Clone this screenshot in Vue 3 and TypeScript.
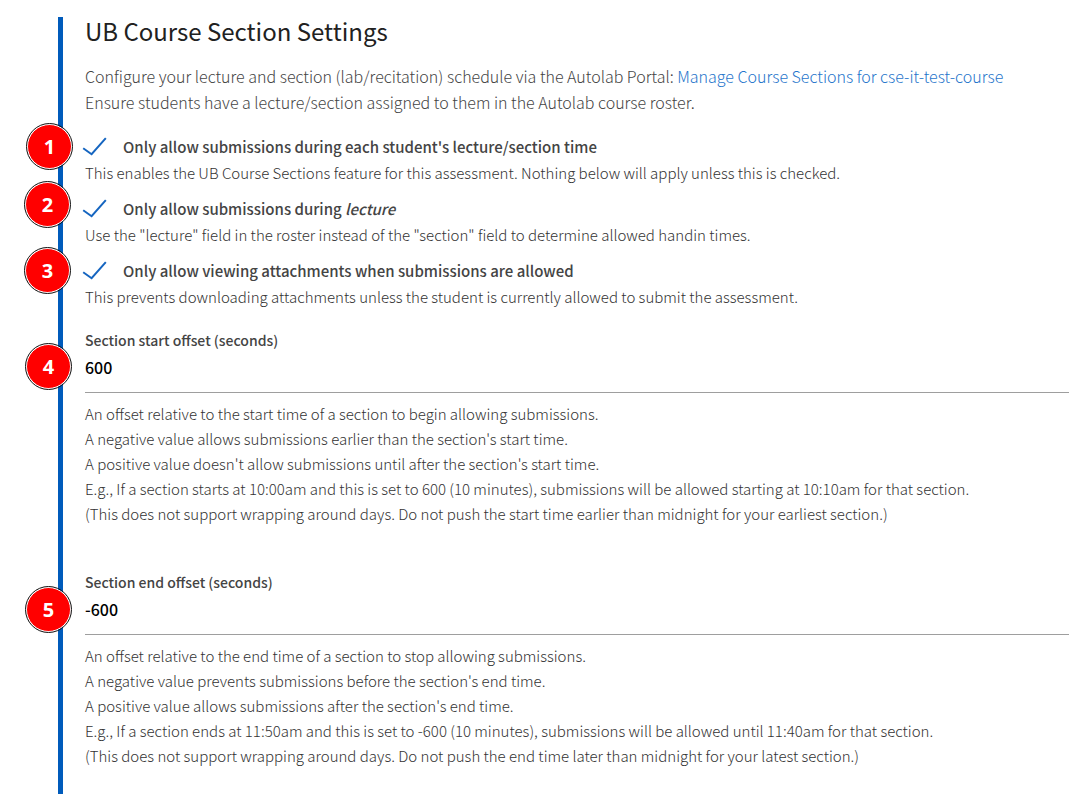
<script setup lang="ts">
import { reactive } from 'vue'

interface Toggle {
  id: string
  checked: boolean
  text: string
  emphasis?: string
  help: string
}

interface Offset {
  id: string
  label: string
  value: string
  help: string[]
}

interface Marker {
  number: number
  x: number
  y: number
}

const toggles = reactive<Toggle[]>([
  {
    id: 'section-time',
    checked: true,
    text: "Only allow submissions during each student's lecture/section time",
    help: 'This enables the UB Course Sections feature for this assessment. Nothing below will apply unless this is checked.',
  },
  {
    id: 'lecture-only',
    checked: true,
    text: 'Only allow submissions during ',
    emphasis: 'lecture',
    help: 'Use the "lecture" field in the roster instead of the "section" field to determine allowed handin times.',
  },
  {
    id: 'attachments',
    checked: true,
    text: 'Only allow viewing attachments when submissions are allowed',
    help: 'This prevents downloading attachments unless the student is currently allowed to submit the assessment.',
  },
])

const offsets = reactive<Offset[]>([
  {
    id: 'start-offset',
    label: 'Section start offset (seconds)',
    value: '600',
    help: [
      'An offset relative to the start time of a section to begin allowing submissions.',
      "A negative value allows submissions earlier than the section's start time.",
      "A positive value doesn't allow submissions until after the section's start time.",
      'E.g., If a section starts at 10:00am and this is set to 600 (10 minutes), submissions will be allowed starting at 10:10am for that section.',
      '(This does not support wrapping around days. Do not push the start time earlier than midnight for your earliest section.)',
    ],
  },
  {
    id: 'end-offset',
    label: 'Section end offset (seconds)',
    value: '-600',
    help: [
      'An offset relative to the end time of a section to stop allowing submissions.',
      "A negative value prevents submissions before the section's end time.",
      "A positive value allows submissions after the section's end time.",
      'E.g., If a section ends at 11:50am and this is set to -600 (10 minutes), submissions will be allowed until 11:40am for that section.',
      '(This does not support wrapping around days. Do not push the end time later than midnight for your latest section.)',
    ],
  },
])

// Centre points of the numbered callouts pinned over the form
const markers: Marker[] = [
  { number: 1, x: 49, y: 146 },
  { number: 2, x: 47, y: 204 },
  { number: 3, x: 47, y: 270 },
  { number: 4, x: 48, y: 366 },
  { number: 5, x: 48, y: 609 },
]
</script>

<template>
  <main class="page">
    <form class="settings" @submit.prevent>
      <h1 class="title">UB Course Section Settings</h1>
      <p class="intro">
        Configure your lecture and section (lab/recitation) schedule via the Autolab Portal:
        <a href="#sections">Manage Course Sections for cse-it-test-course</a><br />
        Ensure students have a lecture/section assigned to them in the Autolab course roster.
      </p>

      <div class="toggles">
        <div v-for="t in toggles" :key="t.id" class="toggle">
          <label class="toggle-label" :for="t.id">
            <span class="tick">
              <input :id="t.id" v-model="t.checked" type="checkbox" :aria-describedby="t.id + '-help'" />
              <svg v-show="t.checked" viewBox="0 0 26 22" aria-hidden="true">
                <path d="M1.2 12.2 9.6 18.2 23.8 2.2" />
              </svg>
            </span>
            <span>{{ t.text }}<em v-if="t.emphasis">{{ t.emphasis }}</em></span>
          </label>
          <p :id="t.id + '-help'" class="toggle-help">{{ t.help }}</p>
        </div>
      </div>

      <div class="offsets">
        <div v-for="o in offsets" :key="o.id" class="offset">
          <label class="offset-label" :for="o.id">{{ o.label }}</label>
          <input :id="o.id" v-model="o.value" class="offset-input" type="text" />
          <p class="offset-help">
            <span v-for="line in o.help" :key="line">{{ line }}</span>
          </p>
        </div>
      </div>
    </form>

    <span
      v-for="m in markers"
      :key="m.number"
      class="marker"
      :style="{ left: m.x + 'px', top: m.y + 'px' }"
    >{{ m.number }}</span>
  </main>
</template>

<style>
body {
  background: #fff;
}
</style>

<style scoped>
.page {
  position: relative;
  padding: 17px 0 18px 58px;
  font-family: "Noto Sans CJK SC", "Open Sans", sans-serif;
  font-size: 15px;
  font-weight: 300;
  color: #333;
}

.settings {
  border-left: 5px solid #005bbb;
  padding: 0 0 26px 22px;
}

.title {
  margin: 0 0 18px;
  font-size: 24px;
  line-height: 28px;
  font-weight: 400;
  color: #212121;
}

.intro {
  margin: 0 0 19px;
  font-size: 16px;
  line-height: 26px;
  color: #444;
}

.intro a {
  color: #1f75cb;
  text-decoration: none;
}

.toggles {
  display: flex;
  flex-direction: column;
  gap: 10px;
  margin-bottom: 18px;
}

.toggle-label {
  display: flex;
  align-items: center;
  gap: 15px;
  line-height: 26px;
  font-weight: 500;
  color: #444;
}

.tick {
  position: relative;
  width: 26px;
  height: 22px;
  margin-left: -3px;
}

.tick input {
  position: absolute;
  inset: 0;
  width: 100%;
  height: 100%;
  margin: 0;
  appearance: none;
}

.tick svg {
  position: absolute;
  inset: 0;
  width: 100%;
  height: 100%;
  pointer-events: none;
  fill: none;
  stroke: #1565c0;
  stroke-width: 2;
}

.toggle-help {
  margin: 0;
  line-height: 26px;
}

.offsets {
  display: flex;
  flex-direction: column;
  gap: 44px;
}

.offset {
  display: flex;
  flex-direction: column;
}

.offset-label {
  font-size: 14px;
  line-height: 24px;
  font-weight: 500;
  color: #444;
}

.offset-input {
  box-sizing: border-box;
  width: 100%;
  height: 41px;
  padding: 0 0 10px;
  border: 0;
  border-bottom: 1px solid #9e9e9e;
  border-radius: 0;
  background: transparent;
  font-family: inherit;
  font-size: 16px;
  font-weight: 500;
  color: #000;
  outline: none;
}

.offset-help {
  display: flex;
  flex-direction: column;
  margin: 8px 0 0;
  line-height: 25px;
}

.marker {
  position: absolute;
  box-sizing: border-box;
  width: 45px;
  height: 45px;
  margin: -22px 0 0 -22px;
  border: 1px solid #fff;
  border-radius: 50%;
  outline: 1px solid #111;
  background: #f00;
  color: #fff;
  font-family: "Open Sans", sans-serif;
  font-size: 20px;
  font-weight: 700;
  line-height: 44px;
  text-align: center;
}
</style>
